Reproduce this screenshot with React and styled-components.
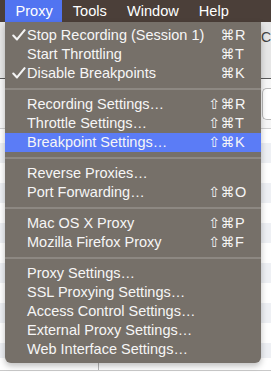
import styled, { createGlobalStyle } from "styled-components";

const GlobalStyle = createGlobalStyle`
  html, body {
    margin: 0;
    padding: 0;
    background: #ffffff;
    font-family: "Liberation Sans", Arial, sans-serif;
  }
`;

// menu contents, null = separator
const items = [
  { label: "Stop Recording (Session 1)", mods: "⌘", key: "R", checked: true },
  { label: "Start Throttling", mods: "⌘", key: "T" },
  { label: "Disable Breakpoints", mods: "⌘", key: "K", checked: true },
  null,
  { label: "Recording Settings…", mods: "⇧⌘", key: "R" },
  { label: "Throttle Settings…", mods: "⇧⌘", key: "T" },
  { label: "Breakpoint Settings…", mods: "⇧⌘", key: "K", active: true },
  null,
  { label: "Reverse Proxies…" },
  { label: "Port Forwarding…", mods: "⇧⌘", key: "O" },
  null,
  { label: "Mac OS X Proxy", mods: "⇧⌘", key: "P" },
  { label: "Mozilla Firefox Proxy", mods: "⇧⌘", key: "F" },
  null,
  { label: "Proxy Settings…" },
  { label: "SSL Proxying Settings…" },
  { label: "Access Control Settings…" },
  { label: "External Proxy Settings…" },
  { label: "Web Interface Settings…" },
];

const menus = ["Proxy", "Tools", "Window", "Help"];

const Check = () => (
  <svg width="14" height="12" viewBox="0 0 14 12">
    <path
      d="M1.3 6.6 L5 10.4 L12.6 1.2"
      fill="none"
      stroke="#f4f4f4"
      strokeWidth="2.1"
      strokeLinecap="round"
      strokeLinejoin="round"
    />
  </svg>
);

const App = () => {
  const rows = [];
  for (let i = 0; i < 12; i++) rows.push(i);

  return (
    <Page>
      <GlobalStyle />
      <MenuBar>
        {menus.map((m, i) => (
          <BarItem key={m} open={i === 0}>
            {m}
          </BarItem>
        ))}
      </MenuBar>

      {/* window behind the menu */}
      <Toolbar>
        <ToolLabel>Cl</ToolLabel>
      </Toolbar>
      <FilterBar>
        <SearchBox />
      </FilterBar>
      <List>
        <HeaderRow />
        {rows.map((r) => (
          <Row key={r} striped={r % 2 === 0} />
        ))}
      </List>
      <Footer>
        <FooterPane />
      </Footer>

      <Dropdown>
        {items.map((item, i) => {
          if (!item) return <Separator key={i} />;
          return (
            <Item key={i} active={item.active}>
              <CheckSlot>{item.checked ? <Check /> : null}</CheckSlot>
              <Label>{item.label}</Label>
              {item.key ? (
                <Shortcut>
                  <Mods>{item.mods}</Mods>
                  <Key>{item.key}</Key>
                </Shortcut>
              ) : null}
            </Item>
          );
        })}
      </Dropdown>
    </Page>
  );
};

const Page = styled.div`
  position: relative;
  width: 271px;
  height: 372px;
  overflow: hidden;
  display: flex;
  flex-direction: column;
  background: #ffffff;
`;

const MenuBar = styled.div`
  height: 22px;
  flex-shrink: 0;
  display: flex;
  align-items: stretch;
  padding-left: 5px;
  background: #4b3f39;
`;

const BarItem = styled.div`
  display: flex;
  align-items: center;
  padding: 0 9.5px 0 10.5px;
  font-size: 14.6px;
  color: #ffffff;
  background: ${(p) => (p.open ? "#5174f1" : "transparent")};
`;

const Toolbar = styled.div`
  height: 51px;
  flex-shrink: 0;
  background: #e6e6e6;
  border-bottom: 1px solid #5a5a5a;
  display: flex;
  justify-content: flex-end;
  padding-top: 5px;
  box-sizing: content-box;
`;

const ToolLabel = styled.div`
  font-size: 14px;
  color: #444;
  width: 10px;
  overflow: hidden;
  margin-top: 2px;
`;

const FilterBar = styled.div`
  height: 49px;
  flex-shrink: 0;
  background: #f7f7f7;
  border-bottom: 1px solid #cfcfcf;
  display: flex;
  justify-content: flex-end;
  align-items: center;
`;

const SearchBox = styled.div`
  width: 8px;
  height: 30px;
  border: 1px solid #b9b9b9;
  border-right: none;
  border-radius: 5px 0 0 5px;
  background: #ffffff;
`;

const List = styled.div`
  display: flex;
  flex-direction: column;
`;

const HeaderRow = styled.div`
  height: 14px;
  background: #ffffff;
`;

const Row = styled.div`
  height: 20px;
  background: ${(p) => (p.striped ? "#eef0f4" : "#ffffff")};
`;

const Footer = styled.div`
  position: absolute;
  left: 0;
  right: 0;
  top: 358px;
  height: 12px;
  background: #ffffff;
  border-bottom: 1px solid #c9c9c9;
`;

const FooterPane = styled.div`
  width: 98px;
  height: 100%;
  border-right: 1px solid #b5b5b5;
`;

const Dropdown = styled.div`
  position: absolute;
  left: 5px;
  top: 22px;
  width: 256px;
  padding: 4px 0 4px;
  background: #767069;
  border-radius: 0 0 6px 6px;
  box-shadow: 0 3px 6px rgba(0, 0, 0, 0.25);
  display: flex;
  flex-direction: column;
`;

const Item = styled.div`
  height: 19px;
  display: flex;
  align-items: center;
  padding-right: 12px;
  font-size: 14.5px;
  color: #f6f6f6;
  background: ${(p) => (p.active ? "#5b7cf6" : "transparent")};
`;

const CheckSlot = styled.div`
  width: 22px;
  flex-shrink: 0;
  display: flex;
  align-items: center;
  padding-left: 7px;
  box-sizing: border-box;
  margin-top: -1px;
`;

const Label = styled.div`
  flex: 1;
  white-space: nowrap;
  margin-top: -2px;
`;

const Shortcut = styled.div`
  display: flex;
  margin-top: -2px;
  font-family: "DejaVu Sans", sans-serif;
  font-size: 14px;
`;

const Mods = styled.span`
  text-align: right;
  letter-spacing: 0.5px;
`;

const Key = styled.span`
  width: 14px;
  font-family: "Liberation Sans", Arial, sans-serif;
  font-size: 14.5px;
`;

const Separator = styled.div`
  height: 2px;
  margin: 5px 0;
  background: #8d8882;
`;

export default App;
